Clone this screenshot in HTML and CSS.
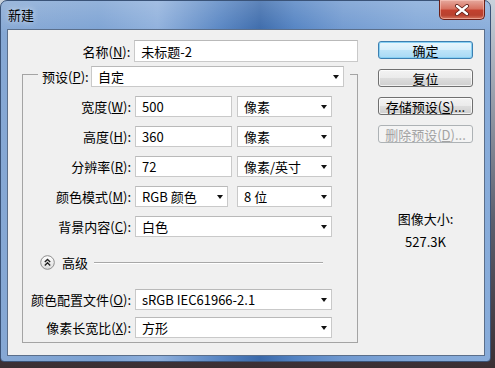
FILE: index.html
```html
<!DOCTYPE html>
<html>
  <head>
    <title>新建</title>
    <link rel="stylesheet" href="styles.css">
  </head>

  <body>
    <div class="window">
      <div class="titlebar">
        <span class="title">新建</span>
        <div class="close">
          <svg width="16" height="12" viewBox="0 0 16 12">
            <path d="M3 2 L13 10 M13 2 L3 10" stroke="#5a1a14" stroke-width="4" stroke-linecap="round" />
            <path d="M3 2 L13 10 M13 2 L3 10" stroke="#fff" stroke-width="2.4" stroke-linecap="round" />
          </svg>
        </div>
      </div>

      <div class="client">
        <div class="form">
          <div class="row name-row">
            <label>名称(<u>N</u>):</label>
            <div class="field name-field">未标题-2</div>
          </div>

          <div class="group">
            <div class="preset-row">
              <label>预设(<u>P</u>):</label>
              <div class="field select preset-field">自定<i class="arrow"></i></div>
            </div>

            <div class="row">
              <label>宽度(<u>W</u>):</label>
              <div class="field num">500</div>
              <div class="field select unit">像素<i class="arrow"></i></div>
            </div>
            <div class="row">
              <label>高度(<u>H</u>):</label>
              <div class="field num">360</div>
              <div class="field select unit">像素<i class="arrow"></i></div>
            </div>
            <div class="row">
              <label>分辨率(<u>R</u>):</label>
              <div class="field num">72</div>
              <div class="field select unit">像素/英寸<i class="arrow"></i></div>
            </div>
            <div class="row">
              <label>颜色模式(<u>M</u>):</label>
              <div class="field select mode">RGB 颜色<i class="arrow"></i></div>
              <div class="field select unit">8 位<i class="arrow"></i></div>
            </div>
            <div class="row">
              <label>背景内容(<u>C</u>):</label>
              <div class="field select full">白色<i class="arrow"></i></div>
            </div>

            <div class="advanced">
              <svg class="adv-icon" width="15" height="15" viewBox="0 0 15 15">
                <defs>
                  <linearGradient id="advBg" x1="0" y1="0" x2="0" y2="1">
                    <stop offset="0" stop-color="#ffffff" />
                    <stop offset="1" stop-color="#dcdcdc" />
                  </linearGradient>
                </defs>
                <circle cx="7.5" cy="7.5" r="6.8" fill="url(#advBg)" stroke="#8c8c8c" stroke-width="1" />
                <path d="M4.8 7 L7.5 4.4 L10.2 7 M4.8 10.4 L7.5 7.8 L10.2 10.4" fill="none" stroke="#222" stroke-width="1.4" />
              </svg>
              <span>高级</span>
              <div class="adv-line"></div>
            </div>

            <div class="row low">
              <label>颜色配置文件(<u>O</u>):</label>
              <div class="field select full">sRGB IEC61966-2.1<i class="arrow"></i></div>
            </div>
            <div class="row low">
              <label>像素长宽比(<u>X</u>):</label>
              <div class="field select full">方形<i class="arrow"></i></div>
            </div>
          </div>
        </div>

        <div class="side">
          <div class="btn default">确定</div>
          <div class="btn">复位</div>
          <div class="btn">存储预设(<u>S</u>)...</div>
          <div class="btn disabled">删除预设(<u>D</u>)...</div>
          <div class="info">
            <span>图像大小:</span>
            <span>527.3K</span>
          </div>
        </div>
      </div>
    </div>
  </body>
</html>
```

FILE: styles.css
```css
:root {
  --face: #f0f0f0;
  --field-border: #c9c9c9;
}

* {
  box-sizing: border-box;
}

body {
  margin: 0;
  height: 368px;
  background: linear-gradient(180deg, #c9d2dc 0%, #5c5f6e 60%, #3b2f33 100%);
  font-family: "Noto Sans CJK SC", "Liberation Sans", sans-serif;
  font-size: 13px;
  line-height: 15px;
  color: #000;
  overflow: hidden;
}

u {
  text-decoration: underline;
  text-underline-offset: 1px;
}

/* window frame */
.window {
  position: relative;
  width: 491px;
  height: 362px;
  padding: 0 5px 6px 6px;
  border-radius: 7px 7px 4px 4px;
  border: 1px solid #3a5378;
  background:
    linear-gradient(180deg, rgba(255, 255, 255, 0.18) 0%, rgba(255, 255, 255, 0.02) 30px, rgba(0, 0, 0, 0) 31px),
    linear-gradient(90deg, #86a8d4 0%, #7ca2d3 20%, #8fb0dc 32%, #5684c2 45%, #3a69aa 53%, #5282c2 60%, #7099d0 70%, #82a8d8 85%, #88acda 100%);
}

.titlebar {
  height: 28px;
  display: flex;
  align-items: center;
}

.title {
  font-size: 13px;
  padding-left: 1px;
  margin-top: -1px;
  text-shadow: 0 0 6px rgba(255, 255, 255, 0.8);
}

.close {
  position: absolute;
  top: -1px;
  right: 5px;
  width: 46px;
  height: 20px;
  border: 1px solid #6b1f17;
  border-top: none;
  border-radius: 0 0 5px 5px;
  background: linear-gradient(180deg, #e6a99e 0%, #d77362 45%, #c2412f 55%, #b8412f 80%, #d6765f 100%);
  box-shadow: inset 0 0 0 1px rgba(255, 210, 200, 0.5);
  display: flex;
  align-items: center;
  justify-content: center;
}

.client {
  height: 327px;
  background: var(--face);
  border: 1px solid #5b6f8b;
  display: flex;
}

/* left form */
.form {
  padding: 10px 0 0 14px;
  width: 350px;
}

.row {
  display: flex;
  align-items: center;
  height: 21px;
  margin-top: 9px;
}
.row label {
  width: 108px;
  text-align: right;
  margin-right: 4px;
  white-space: nowrap;
}

.name-row {
  margin-top: 0;
  height: 22px;
}
.name-row label {
  width: 109px;
}

.field {
  height: 100%;
  background: #fff;
  border: 1px solid var(--field-border);
  border-top-color: #b9b9b9;
  display: flex;
  align-items: center;
  padding-left: 6px;
  white-space: nowrap;
}
.select {
  padding-right: 4px;
}
.arrow {
  margin-left: auto;
  width: 0;
  height: 0;
  border-left: 3.5px solid transparent;
  border-right: 3.5px solid transparent;
  border-top: 4px solid #111;
}

.name-field {
  width: 225px;
}
.num {
  width: 97px;
}
.unit {
  width: 95px;
  margin-left: 5px;
}
.mode {
  width: 93px;
  margin-right: 4px;
  margin-left: 0;
}
.full {
  width: 197px;
}

.group {
  margin-top: 12px;
  width: 336px;
  border: 1px solid #a4a4a4;
  padding-bottom: 4px;
}

.preset-row {
  margin: -9px 0 0 15px;
  width: 312px;
  height: 21px;
  padding: 0 6px 0 4px;
  background: var(--face);
  display: flex;
  align-items: center;
}
.preset-row label {
  flex: 1;
  white-space: nowrap;
}
.preset-field {
  width: 253px;
  flex: none;
}

.advanced {
  display: flex;
  align-items: center;
  height: 15px;
  margin: 18px 0 0 17px;
}
.adv-icon {
  flex: none;
}
.advanced span {
  margin-left: 7px;
}
.adv-line {
  flex: 1;
  height: 2px;
  margin: 1px 34px 0 6px;
  border-top: 1px solid #a8a8a8;
  border-bottom: 1px solid #fff;
}

.row.low {
  margin-top: 7px;
}
.advanced + .row.low {
  margin-top: 19px;
}

/* right column */
.side {
  margin-left: 20px;
  padding-top: 11px;
  width: 95px;
  display: flex;
  flex-direction: column;
  gap: 10px;
}

.btn {
  height: 18px;
  border: 1px solid #707070;
  border-radius: 3px;
  background: linear-gradient(180deg, #f3f3f3 0%, #ebebeb 48%, #dddddd 52%, #cfcfcf 100%);
  box-shadow: inset 0 0 0 1px rgba(255, 255, 255, 0.7);
  display: flex;
  align-items: center;
  justify-content: center;
  white-space: nowrap;
}
.btn.default {
  border-color: #3c7fb1;
  background: linear-gradient(180deg, #e9f6fd 0%, #d6eefb 48%, #bde4f8 52%, #a7d9f5 100%);
  box-shadow: inset 0 0 0 1px #88d0f3;
}
.btn.disabled {
  color: #a3a3a3;
  border-color: #adb2b5;
  background: #f4f4f4;
  box-shadow: none;
}

.info {
  margin-top: 58px;
  display: flex;
  flex-direction: column;
  align-items: center;
  gap: 8px;
}
```
